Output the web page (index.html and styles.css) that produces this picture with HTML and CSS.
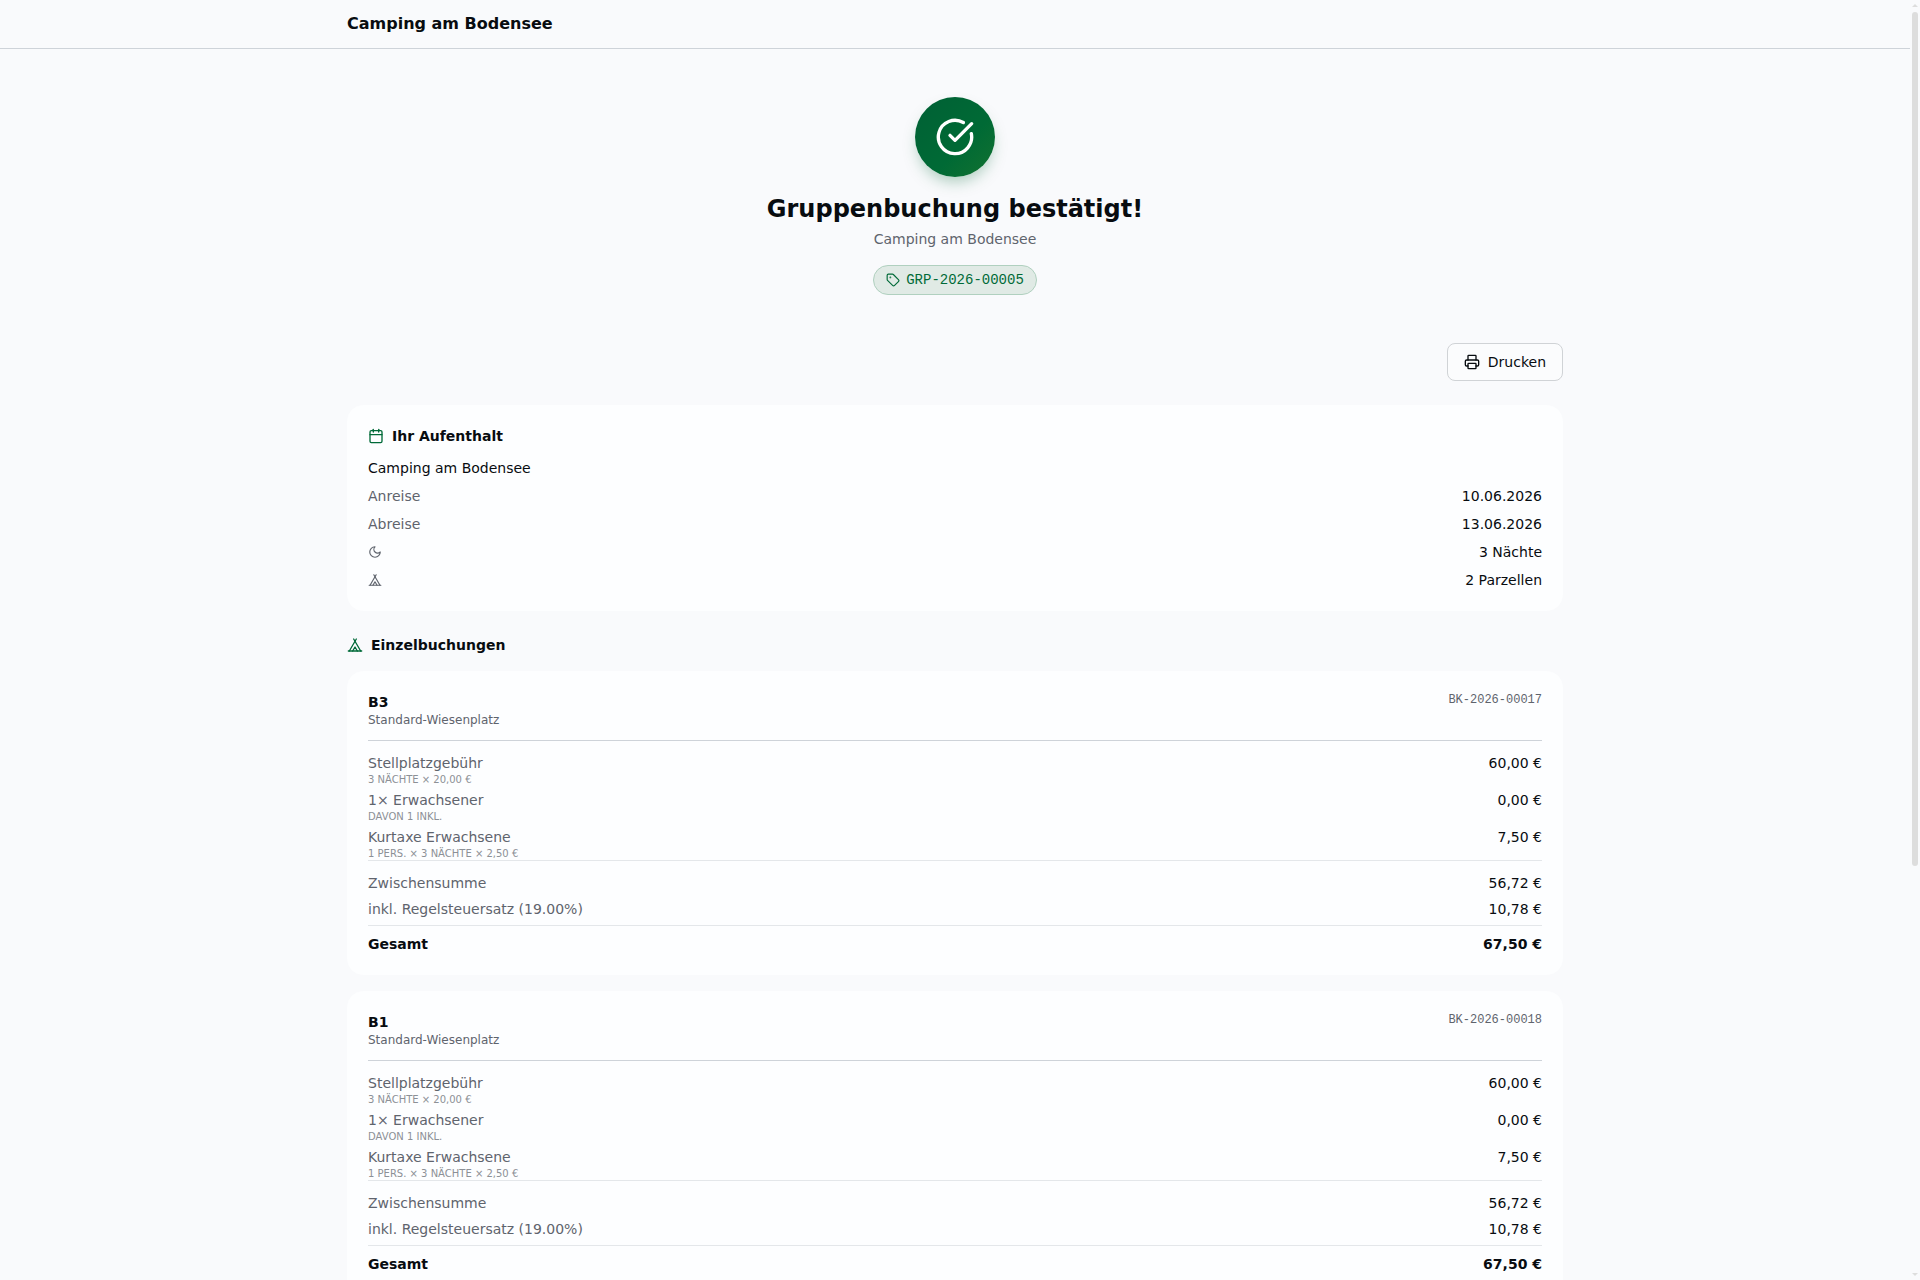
FILE: index.html
```html
<!DOCTYPE html>
<html lang="de">
<head>
  <meta charset="utf-8">
  <meta name="viewport" content="width=device-width, initial-scale=1">
  <title>Camping am Bodensee</title>
  <link rel="stylesheet" href="styles.css">
</head>
<body>
  <svg class="sprite" aria-hidden="true">
    <symbol id="icon-tent" viewBox="0 0 24 24">
      <path d="M3.5 21 14 3"/>
      <path d="M20.5 21 10 3"/>
      <path d="M15.5 21 12 15l-3.5 6"/>
      <path d="M2 21h20"/>
    </symbol>
  </svg>

  <header class="site-header">
    <div class="container">
      <span class="site-name">Camping am Bodensee</span>
    </div>
  </header>

  <main class="container main">
    <section class="hero">
      <div class="hero-icon">
        <svg class="icon" width="40" height="40" viewBox="0 0 24 24">
          <path d="M21.801 10A10 10 0 1 1 17 3.335"/>
          <path d="m9 11 3 3L22 4"/>
        </svg>
      </div>
      <h1 class="hero-title">Gruppenbuchung bestätigt!</h1>
      <p class="hero-subtitle">Camping am Bodensee</p>
      <div class="badge">
        <svg class="icon" width="14" height="14" viewBox="0 0 24 24">
          <path d="M12.586 2.586A2 2 0 0 0 11.172 2H4a2 2 0 0 0-2 2v7.172a2 2 0 0 0 .586 1.414l8.704 8.704a2.426 2.426 0 0 0 3.42 0l6.58-6.58a2.426 2.426 0 0 0 0-3.42z"/>
          <circle cx="7.5" cy="7.5" r=".5" fill="currentColor"/>
        </svg>
        <span>GRP-2026-00005</span>
      </div>
    </section>

    <div class="actions">
      <button type="button" class="print-button">
        <svg class="icon" width="16" height="16" viewBox="0 0 24 24">
          <path d="M6 18H4a2 2 0 0 1-2-2v-5a2 2 0 0 1 2-2h16a2 2 0 0 1 2 2v5a2 2 0 0 1-2 2h-2"/>
          <path d="M6 9V3a1 1 0 0 1 1-1h10a1 1 0 0 1 1 1v6"/>
          <rect x="6" y="14" width="12" height="8" rx="1"/>
        </svg>
        Drucken
      </button>
    </div>

    <section class="card stay">
      <h2 class="section-title">
        <svg class="icon" width="16" height="16" viewBox="0 0 24 24">
          <path d="M8 2v4"/>
          <path d="M16 2v4"/>
          <rect x="3" y="4" width="18" height="18" rx="2"/>
          <path d="M3 10h18"/>
        </svg>
        Ihr Aufenthalt
      </h2>
      <p class="stay-name">Camping am Bodensee</p>
      <dl class="stay-list">
        <div class="row"><dt>Anreise</dt><dd>10.06.2026</dd></div>
        <div class="row"><dt>Abreise</dt><dd>13.06.2026</dd></div>
        <div class="row">
          <dt>
            <svg class="icon" width="14" height="14" viewBox="0 0 24 24">
              <path d="M12 3a6 6 0 0 0 9 9 9 9 0 1 1-9-9Z"/>
            </svg>
          </dt>
          <dd>3 Nächte</dd>
        </div>
        <div class="row">
          <dt><svg class="icon" width="14" height="14"><use href="#icon-tent"/></svg></dt>
          <dd>2 Parzellen</dd>
        </div>
      </dl>
    </section>

    <section class="bookings">
      <h2 class="section-title">
        <svg class="icon" width="16" height="16"><use href="#icon-tent"/></svg>
        Einzelbuchungen
      </h2>

      <article class="card">
        <div class="booking-head">
          <div>
            <h3 class="booking-name">B3</h3>
            <p class="booking-type">Standard-Wiesenplatz</p>
          </div>
          <span class="booking-code">BK-2026-00017</span>
        </div>
        <dl class="items">
          <div class="row"><dt>Stellplatzgebühr<small>3 Nächte × 20,00 €</small></dt><dd>60,00 €</dd></div>
          <div class="row"><dt>1× Erwachsener<small>davon 1 inkl.</small></dt><dd>0,00 €</dd></div>
          <div class="row"><dt>Kurtaxe Erwachsene<small>1 Pers. × 3 Nächte × 2,50 €</small></dt><dd>7,50 €</dd></div>
        </dl>
        <dl class="sums">
          <div class="row"><dt>Zwischensumme</dt><dd>56,72 €</dd></div>
          <div class="row"><dt>inkl. Regelsteuersatz (19.00%)</dt><dd>10,78 €</dd></div>
          <div class="row total"><dt>Gesamt</dt><dd>67,50 €</dd></div>
        </dl>
      </article>

      <article class="card">
        <div class="booking-head">
          <div>
            <h3 class="booking-name">B1</h3>
            <p class="booking-type">Standard-Wiesenplatz</p>
          </div>
          <span class="booking-code">BK-2026-00018</span>
        </div>
        <dl class="items">
          <div class="row"><dt>Stellplatzgebühr<small>3 Nächte × 20,00 €</small></dt><dd>60,00 €</dd></div>
          <div class="row"><dt>1× Erwachsener<small>davon 1 inkl.</small></dt><dd>0,00 €</dd></div>
          <div class="row"><dt>Kurtaxe Erwachsene<small>1 Pers. × 3 Nächte × 2,50 €</small></dt><dd>7,50 €</dd></div>
        </dl>
        <dl class="sums">
          <div class="row"><dt>Zwischensumme</dt><dd>56,72 €</dd></div>
          <div class="row"><dt>inkl. Regelsteuersatz (19.00%)</dt><dd>10,78 €</dd></div>
          <div class="row total"><dt>Gesamt</dt><dd>67,50 €</dd></div>
        </dl>
      </article>
    </section>
  </main>

  <div class="scrollbar" aria-hidden="true">
    <svg width="6" height="3" viewBox="0 0 6 3"><path d="M0 3 3 0l3 3z"/></svg>
    <div class="scrollbar-track"><div class="scrollbar-thumb"></div></div>
    <svg width="6" height="3" viewBox="0 0 6 3"><path d="M0 0h6L3 3z"/></svg>
  </div>
</body>
</html>
```

FILE: styles.css
```css
* {
  box-sizing: border-box;
  margin: 0;
  padding: 0;
}

html {
  height: 100%;
  overflow: hidden;
  background-color: #f9fafc;
}

body {
  height: 100%;
  padding-right: 10px;
  overflow-y: auto;
  scrollbar-width: none;
  color: #080c10;
  font-family: "DejaVu Sans", sans-serif;
  font-size: 14px;
  line-height: 20px;
}

.sprite {
  display: none;
}

.icon {
  flex-shrink: 0;
  fill: none;
  stroke: currentColor;
  stroke-width: 2;
  stroke-linecap: round;
  stroke-linejoin: round;
}

.container {
  max-width: 1280px;
  margin: 0 auto;
  padding: 0 32px;
}

.site-header {
  padding: 12px 0;
  border-bottom: 1px solid #ced3d9;
}

.site-name {
  display: block;
  font-size: 16px;
  font-weight: bold;
  line-height: 24px;
}

.main {
  padding-top: 48px;
  padding-bottom: 48px;
}

/* Confirmation */
.hero {
  display: flex;
  flex-direction: column;
  align-items: center;
  margin-bottom: 48px;
  text-align: center;
}

.hero-icon {
  display: flex;
  align-items: center;
  justify-content: center;
  width: 80px;
  height: 80px;
  margin-bottom: 16px;
  border-radius: 50%;
  background: linear-gradient(135deg, #006035, #006a35 60%, #137230);
  box-shadow: 0 8px 16px -4px rgba(0, 104, 52, 0.35);
  color: #fff;
}

.hero-title {
  font-size: 24px;
  line-height: 32px;
}

.hero-subtitle {
  margin-top: 4px;
  color: #5f646d;
}

.badge {
  display: flex;
  align-items: center;
  gap: 6px;
  margin-top: 16px;
  padding: 4px 12px;
  border: 1px solid #b0d0bf;
  border-radius: 15px;
  background-color: #e0eae5;
  color: #006a38;
  font-family: "Liberation Mono", monospace;
}

.actions {
  display: flex;
  justify-content: flex-end;
  margin-bottom: 24px;
}

.print-button {
  display: flex;
  align-items: center;
  gap: 8px;
  padding: 8px 16px;
  border: 1px solid #d0d3d6;
  border-radius: 8px;
  background-color: #fbfcfd;
  color: inherit;
  font: inherit;
  cursor: pointer;
}

/* Cards */
.card {
  padding: 20px;
  border: 1px solid #fdfeff;
  border-radius: 16px;
  background-color: #fdfeff;
}

.section-title {
  display: flex;
  align-items: center;
  gap: 8px;
  font-size: 14px;
}

.section-title .icon {
  color: #006a38;
}

.stay-name {
  margin: 12px 0 8px;
}

.stay-list {
  display: grid;
  gap: 8px;
}

.row {
  display: flex;
  justify-content: space-between;
  gap: 16px;
}

.row dt {
  color: #5f646d;
}

.row dt > .icon {
  display: block;
  margin-top: 3px;
}

.row small {
  display: block;
  color: #8c9096;
  font-size: 10px;
  line-height: 13px;
  text-transform: uppercase;
}

.bookings {
  display: grid;
  gap: 16px;
  margin-top: 24px;
}

.booking-head {
  display: flex;
  justify-content: space-between;
  align-items: flex-start;
  padding-bottom: 12px;
  border-bottom: 1px solid #ced3d9;
}

.booking-name {
  font-size: 14px;
}

.booking-type {
  color: #5f646d;
  font-size: 12px;
  line-height: 16px;
}

.booking-code {
  color: #5f646d;
  font-family: "Liberation Mono", monospace;
  font-size: 12px;
  line-height: 16px;
}

.items {
  display: grid;
  gap: 4px;
  margin-top: 12px;
}

.sums {
  display: grid;
  gap: 6px;
  padding-top: 12px;
  border-top: 1px solid #e4e7ea;
}

.total {
  padding-top: 8px;
  border-top: 1px solid #e4e7ea;
  font-weight: bold;
}

.total dt {
  color: inherit;
}

/* Scrollbar */
.scrollbar {
  position: fixed;
  top: 0;
  right: 0;
  bottom: 0;
  display: flex;
  flex-direction: column;
  gap: 5px;
  width: 10px;
  padding: 4px 2px;
  fill: #dddddd;
}

.scrollbar-track {
  flex: 1;
}

.scrollbar-thumb {
  height: 68%;
  border-radius: 3px;
  background-color: #dddddd;
}
```
